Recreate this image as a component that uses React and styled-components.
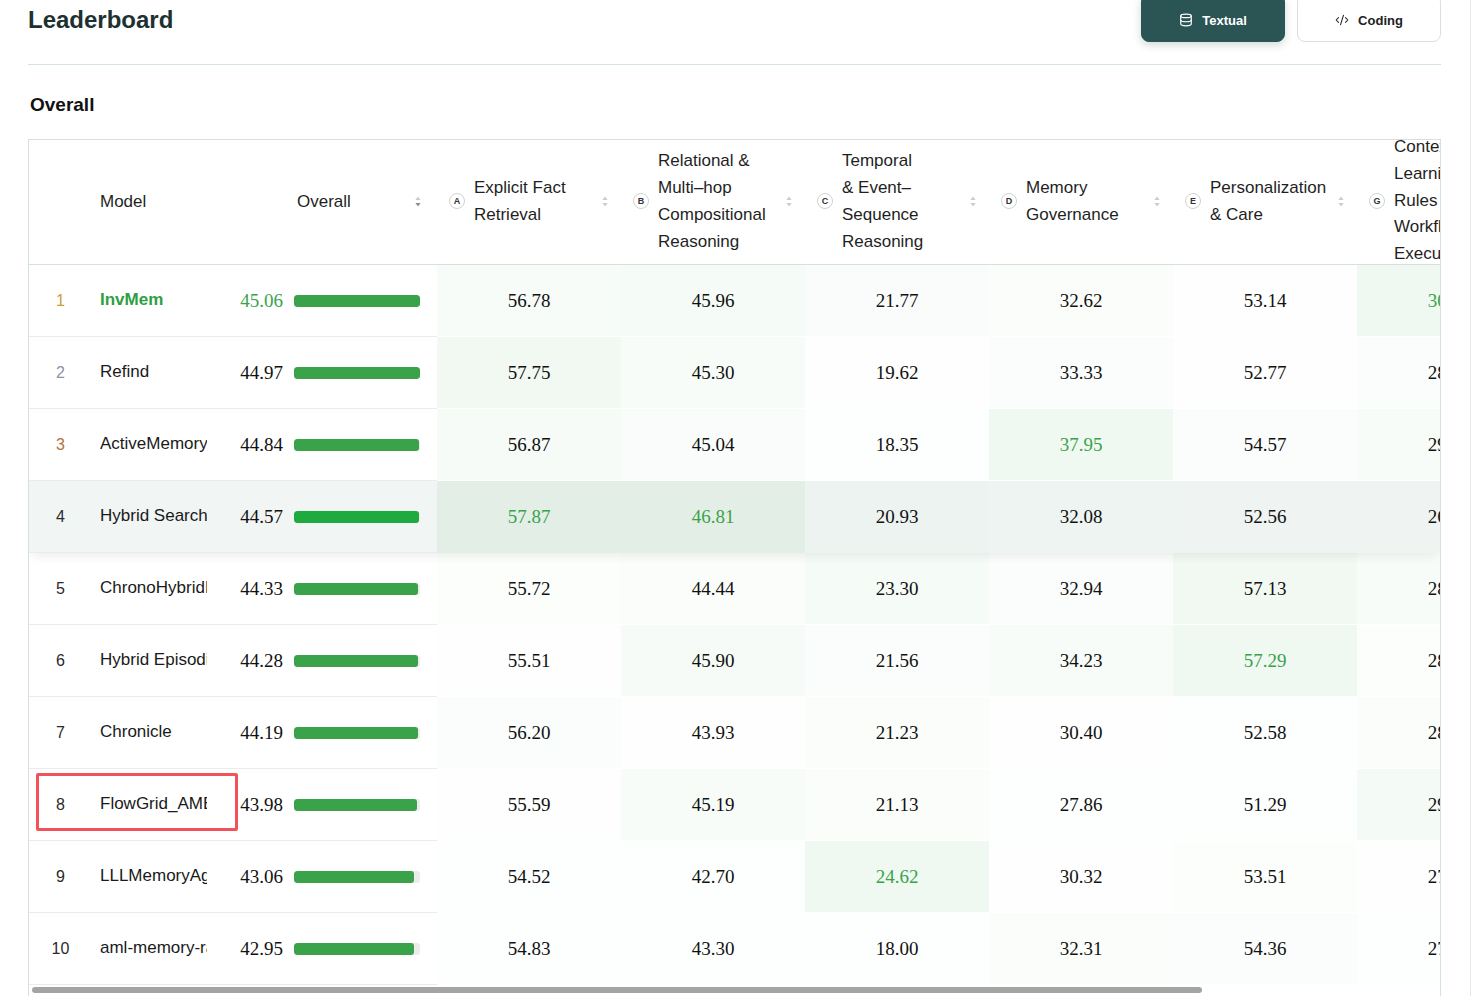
import React from 'react';
import styled, { createGlobalStyle } from 'styled-components';
import { Database, CodeXml } from 'lucide-react';

const GlobalStyle = createGlobalStyle`
  html, body {
    margin: 0;
    padding: 0;
    background: #fff;
    overflow: hidden;
    height: 996px;
  }
  body {
    font-family: "Liberation Sans", Arial, sans-serif;
    color: #1f1f1f;
  }
  * { box-sizing: border-box; }
`;

const Page = styled.div`
    width: 1471px;
    height: 996px;
    padding: 0 29px 0 28px;
    border-right: 1px solid #e2e8e7;
    overflow: hidden;
`;

const TopBar = styled.header`
    display: flex;
    align-items: center;
    justify-content: space-between;
    margin-top: -6px;
    padding-bottom: 22px;
    border-bottom: 1px solid #d6e2df;
`;

const Title = styled.h1`
    margin: 0;
    padding-top: 4px;
    font-size: 24px;
    line-height: 28px;
    font-weight: 700;
    color: #1d3131;
`;

const Switch = styled.div`
    display: flex;
    gap: 12px;
`;

const ModeButton = styled.button`
    width: 144px;
    height: 48px;
    padding-top: 5px;
    border-radius: 8px;
    display: flex;
    align-items: center;
    justify-content: center;
    gap: 9px;
    font: 700 13px "Liberation Sans", Arial, sans-serif;
    background: ${p => (p.$active ? '#2b5455' : '#fff')};
    color: ${p => (p.$active ? '#fff' : '#222')};
    border: 1px solid ${p => (p.$active ? '#2b5455' : '#d8e1df')};
    box-shadow: ${p => (p.$active ? '0 3px 8px rgba(30,60,60,0.2)' : 'none')};
`;

const SectionTitle = styled.h2`
    margin: 28px 0 22px 2px;
    font-size: 19px;
    line-height: 24px;
    font-weight: 700;
    color: #111;
`;

const TableFrame = styled.div`
    border: 1px solid #d6e1de;
    border-bottom: none;
    overflow: hidden;
    height: 860px;
`;

const COLS = '63px 128px 217px repeat(6, 184px)';

const HeaderRow = styled.div`
    display: grid;
    grid-template-columns: ${COLS};
    grid-template-rows: 124px;
    height: 125px;
    border-bottom: 1px solid #d6e1de;
`;

const HeadCell = styled.div`
    display: flex;
    align-items: center;
    font-size: 17px;
    line-height: 27px;
    color: #1f1f1f;
    padding-left: ${p => p.$pad || 0}px;
    padding-right: ${p => p.$padRight || 0}px;
    padding-bottom: 2px;
    justify-content: ${p => (p.$spread ? 'space-between' : 'flex-start')};
`;

const MetricHead = styled.div`
    display: flex;
    align-items: center;
    padding: 0 12px 2px;
    font-size: 17px;
    line-height: 27px;
    color: #1f1f1f;
`;

const Badge = styled.span`
    flex-shrink: 0;
    width: 16px;
    height: 16px;
    margin-right: 9px;
    border: 1px solid #cfd3d3;
    border-radius: 50%;
    display: flex;
    align-items: center;
    justify-content: center;
    font-size: 9px;
    line-height: 9px;
    font-weight: 700;
    color: #333;
`;

const HeadText = styled.span`
    flex: 1;
    min-width: 0;
    white-space: ${p => (p.$nowrap ? 'nowrap' : 'normal')};
    line-height: ${p => (p.$nowrap ? '26.75px' : '27px')};
`;

const SortWrap = styled.span`
    flex-shrink: 0;
    width: 8px;
    display: flex;
    justify-content: center;
`;

const Row = styled.div`
    display: grid;
    grid-template-columns: ${COLS};
    grid-template-rows: 72px;
    height: 72px;
    position: relative;
    background: ${p => (p.$hover ? '#f1f5f4' : '#fff')};
    box-shadow: ${p => (p.$hover ? '0 6px 10px -3px rgba(0,0,0,0.07)' : 'none')};
    z-index: ${p => (p.$hover ? 1 : 0)};
`;

const RankCell = styled.div`
    display: flex;
    align-items: center;
    justify-content: center;
    font-size: 16px;
    color: ${p => p.$color};
    border-bottom: 1px solid #e8ecec;
`;

const NameCell = styled.div`
    display: flex;
    align-items: center;
    padding-left: 8px;
    border-bottom: 1px solid #e8ecec;
`;

const ModelName = styled.span`
    display: block;
    width: 107px;
    overflow: hidden;
    white-space: nowrap;
    font-size: 17px;
    font-weight: ${p => (p.$lead ? 700 : 400)};
    color: ${p => (p.$lead ? '#2f9e44' : '#1a1a1a')};
    margin-top: -2px;
`;

const OverallCell = styled.div`
    display: flex;
    align-items: center;
    padding-right: 17px;
    border-bottom: 1px solid #e8ecec;
`;

const Score = styled.span`
    width: 63px;
    margin-right: 11px;
    text-align: right;
    font-family: "Liberation Serif", "Times New Roman", serif;
    font-size: 19px;
    color: ${p => (p.$lead ? '#3aa34a' : '#111')};
`;

const BarTrack = styled.div`
    width: 126px;
    height: 12px;
    border-radius: 3px;
    background: #ececec;
    overflow: hidden;
`;

const BarFill = styled.div`
    height: 100%;
    border-radius: 3px;
    background: ${p => (p.$hover ? '#1faa3e' : '#3aa34a')};
`;

const HeatCell = styled.div`
    display: flex;
    align-items: center;
    justify-content: center;
    font-family: "Liberation Serif", "Times New Roman", serif;
    font-size: 19px;
    color: ${p => (p.$best ? '#3aa34a' : '#111')};
    border-bottom: 1px solid ${p => (p.$hover ? 'transparent' : '#fff')};
`;

const Marker = styled.div`
    position: absolute;
    left: 7px;
    top: 4px;
    width: 202px;
    height: 58px;
    border: 3px solid #f2525a;
    border-radius: 2px;
    pointer-events: none;
`;

const ScrollThumb = styled.div`
    margin: 2px 0 0 3px;
    width: 1170px;
    height: 6px;
    border-radius: 3px;
    background: #a4a4a4;
`;

const SortIcon = ({ active }) => (
    <svg width="6" height="11" viewBox="0 0 6 11">
        <path d="M3 0.5 L5.6 4 L0.4 4 Z" fill="#c9cccc" />
        <path d="M3 10.5 L5.6 7 L0.4 7 Z" fill={active ? '#8d9191' : '#c9cccc'} />
    </svg>
);

const NB = '\u00a0';

const metrics = [
    { key: 'A', label: 'Explicit Fact Retrieval' },
    { key: 'B', label: 'Relational & Multi–hop Compositional Reasoning' },
    { key: 'C', label: `Temporal &${NB}Event–Sequence Reasoning` },
    { key: 'D', label: 'Memory Governance' },
    { key: 'E', label: `Personalization &${NB}Care` },
    { key: 'G', lines: ['Contextual', 'Learning', 'Rules &', 'Workflow', 'Execution'] },
];

const rows = [
    { name: 'InvMem', overall: 45.06, scores: [56.78, 45.96, 21.77, 32.62, 53.14, 30.12] },
    { name: 'Refind', overall: 44.97, scores: [57.75, 45.30, 19.62, 33.33, 52.77, 28.45] },
    { name: 'ActiveMemory', overall: 44.84, scores: [56.87, 45.04, 18.35, 37.95, 54.57, 29.03] },
    { name: 'Hybrid Search', overall: 44.57, scores: [57.87, 46.81, 20.93, 32.08, 52.56, 26.71] },
    { name: 'ChronoHybridMemory', overall: 44.33, scores: [55.72, 44.44, 23.30, 32.94, 57.13, 28.90] },
    { name: 'Hybrid Episodic', overall: 44.28, scores: [55.51, 45.90, 21.56, 34.23, 57.29, 28.14] },
    { name: 'Chronicle', overall: 44.19, scores: [56.20, 43.93, 21.23, 30.40, 52.58, 28.37] },
    { name: 'FlowGrid_AMEM', overall: 43.98, scores: [55.59, 45.19, 21.13, 27.86, 51.29, 29.56] },
    { name: 'LLLMemoryAgent', overall: 43.06, scores: [54.52, 42.70, 24.62, 30.32, 53.51, 27.82] },
    { name: 'aml-memory-rag', overall: 42.95, scores: [54.83, 43.30, 18.00, 32.31, 54.36, 27.40] },
];

const HOVER_ROW = 3;
const MARKED_ROW = 7;

const rankColor = (i) => ['#caa23c', '#8a94a5', '#b5733b'][i] || '#2a2a2a';

const colStats = metrics.map((_, c) => {
    const vals = rows.map(r => r.scores[c]);
    return { min: Math.min(...vals), max: Math.max(...vals) };
});

// lighter tint for low values, clearly green only near the column best
const heatBg = (v, c) => {
    const { min, max } = colStats[c];
    const t = (v - min) / (max - min);
    return `rgba(46, 160, 67, ${(0.006 + 0.065 * t * t).toFixed(3)})`;
};

const topOverall = Math.max(...rows.map(r => r.overall));

function Header() {
    return (
        <HeaderRow>
            <HeadCell />
            <HeadCell $pad={8}>Model</HeadCell>
            <HeadCell $pad={77} $padRight={15} $spread>
                Overall
                <SortWrap><SortIcon active /></SortWrap>
            </HeadCell>
            {metrics.map(m => (
                <MetricHead key={m.key}>
                    <Badge>{m.key}</Badge>
                    <HeadText $nowrap={!!m.lines}>
                        {m.lines ? m.lines.map((l, i) => <div key={i}>{l}</div>) : m.label}
                    </HeadText>
                    {!m.lines && <SortWrap><SortIcon /></SortWrap>}
                </MetricHead>
            ))}
        </HeaderRow>
    );
}

export default function App() {
    return (
        <>
            <GlobalStyle />
            <Page>
                <TopBar>
                    <Title>Leaderboard</Title>
                    <Switch>
                        <ModeButton $active>
                            <Database size={14} strokeWidth={2} />
                            Textual
                        </ModeButton>
                        <ModeButton>
                            <CodeXml size={14} strokeWidth={1.8} />
                            Coding
                        </ModeButton>
                    </Switch>
                </TopBar>

                <SectionTitle>Overall</SectionTitle>

                <TableFrame>
                    <Header />
                    {rows.map((r, i) => {
                        const hover = i === HOVER_ROW;
                        const lead = i === 0;
                        return (
                            <Row key={r.name} $hover={hover}>
                                <RankCell $color={rankColor(i)}>{i + 1}</RankCell>
                                <NameCell>
                                    <ModelName $lead={lead}>{r.name}</ModelName>
                                </NameCell>
                                <OverallCell>
                                    <Score $lead={lead}>{r.overall.toFixed(2)}</Score>
                                    <BarTrack>
                                        <BarFill
                                            $hover={hover}
                                            style={{ width: `${(r.overall / topOverall) * 100}%` }}
                                        />
                                    </BarTrack>
                                </OverallCell>
                                {r.scores.map((v, c) => (
                                    <HeatCell
                                        key={c}
                                        $hover={hover}
                                        $best={v === colStats[c].max}
                                        style={{ background: heatBg(v, c) }}
                                    >
                                        {v.toFixed(2)}
                                    </HeatCell>
                                ))}
                                {i === MARKED_ROW && <Marker />}
                            </Row>
                        );
                    })}
                    <ScrollThumb />
                </TableFrame>
            </Page>
        </>
    );
}
